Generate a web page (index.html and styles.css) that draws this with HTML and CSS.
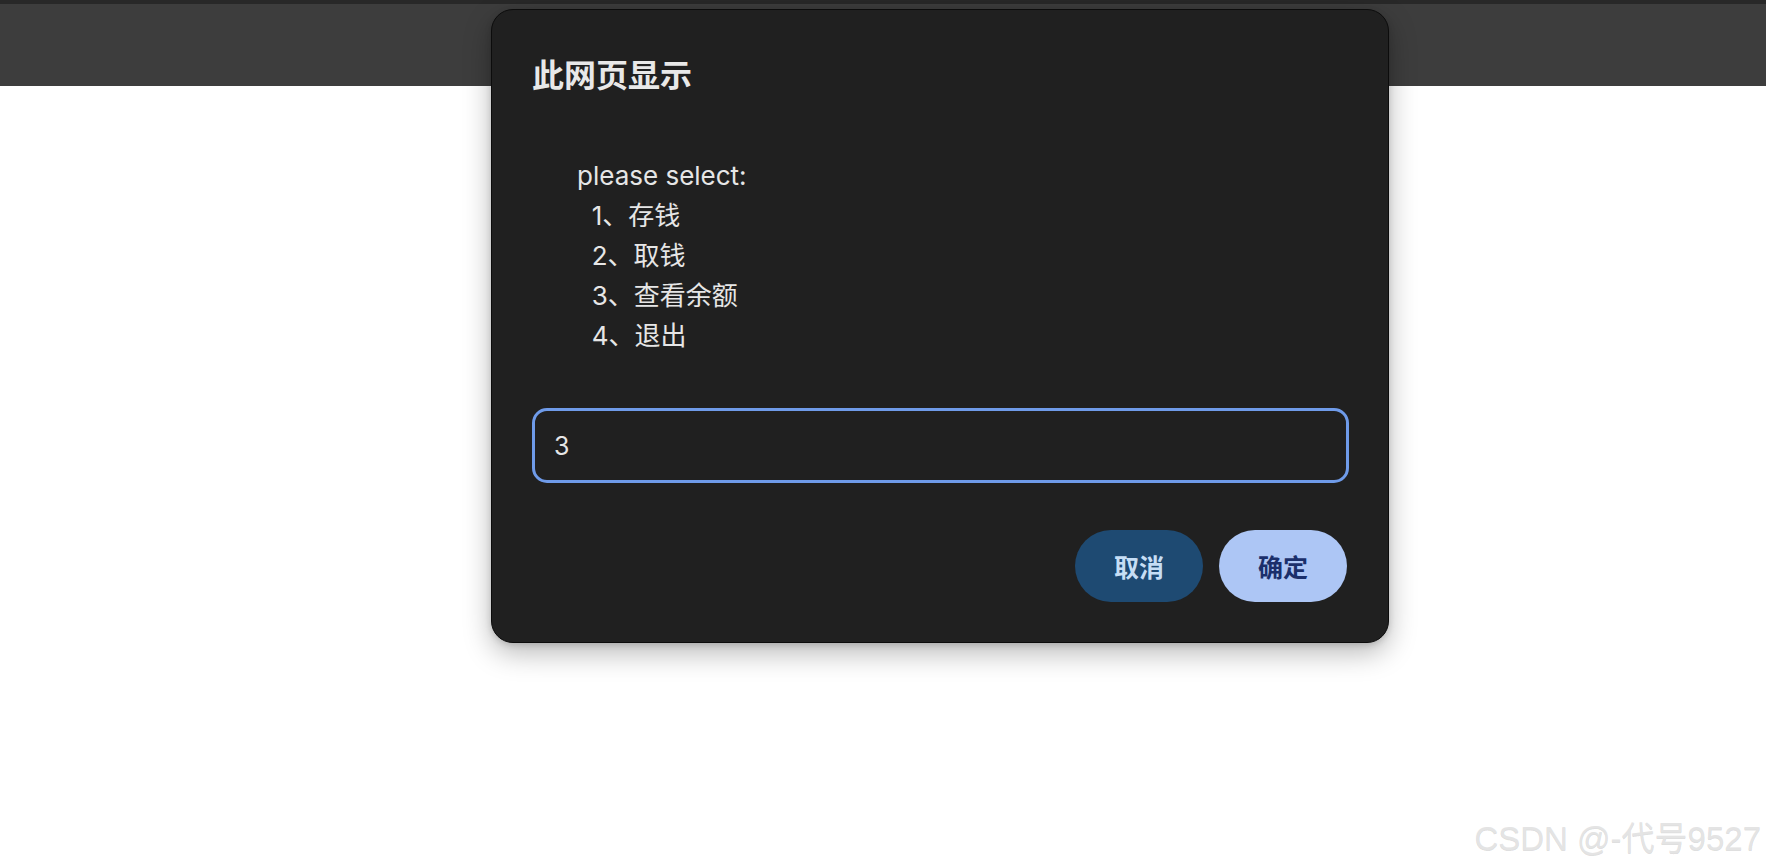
FILE: index.html
```html
<!DOCTYPE html>
<html lang="zh-CN">
<head>
<meta charset="utf-8">
<title>此网页显示</title>
<link rel="stylesheet" href="styles.css">
</head>
<body>
  <div class="topbar"></div>
  <div class="page"></div>

  <div class="dialog" role="dialog">
    <h1 class="dialog-title">此网页显示</h1>
    <div class="dialog-message">please select:
  1、存钱
  2、取钱
  3、查看余额
  4、退出</div>
    <div class="dialog-input"><span class="input-value">3</span></div>
    <div class="dialog-actions">
      <button class="btn btn-cancel">取消</button>
      <button class="btn btn-ok">确定</button>
    </div>
  </div>

  <div class="watermark">CSDN @-代号9527</div>
</body>
</html>
```

FILE: styles.css
```css
html, body {
  margin: 0;
  padding: 0;
  height: 100%;
  background: #ffffff;
  overflow: hidden;
}

body {
  font-family: "Inter", "Noto Sans CJK SC", sans-serif;
}

.topbar {
  height: 82px;
  background: #3d3d3d;
  border-top: 4px solid #282828;
}

.dialog {
  position: absolute;
  left: 491px;
  top: 9px;
  width: 898px;
  height: 634px;
  box-sizing: border-box;
  padding: 46px 39px 0 40px;
  background: #202020;
  border: 1px solid #0c0c0c;
  border-radius: 22px;
  box-shadow: 0 10px 28px rgba(0, 0, 0, 0.28), 0 2px 6px rgba(0, 0, 0, 0.15);
  display: flex;
  flex-direction: column;
  color: #e6e6e6;
}

.dialog-title {
  margin: 0;
  font-size: 32px;
  line-height: 40px;
  font-weight: 700;
  color: #e8e8e8;
}

.dialog-message {
  margin-top: 60px;
  padding-left: 45px;
  white-space: pre;
  font-size: 26px;
  line-height: 40px;
  color: #e6e6e6;
}

.dialog-input {
  margin-top: 52px;
  height: 75px;
  box-sizing: border-box;
  border: 3px solid #6f9be9;
  border-radius: 15px;
  display: flex;
  align-items: center;
  padding-left: 19px;
}

.input-value {
  font-size: 25px;
  color: #e6e6e6;
}

.dialog-actions {
  margin-top: 47px;
  display: flex;
  justify-content: flex-end;
  gap: 16px;
  padding-right: 2px;
}

.btn {
  width: 128px;
  height: 72px;
  border: none;
  border-radius: 36px;
  font-family: "Inter", "Noto Sans CJK SC", sans-serif;
  font-size: 25px;
  font-weight: 700;
  padding: 0;
}

.btn-cancel {
  background: #1e4a72;
  color: #c6def5;
}

.btn-ok {
  background: #adc6f5;
  color: #1b2f6b;
}

.watermark {
  position: absolute;
  right: 5px;
  bottom: 10px;
  font-family: "Liberation Sans", "Noto Sans CJK SC", sans-serif;
  font-size: 33px;
  line-height: 38px;
  font-weight: 400;
  color: #e4e4e4;
  text-shadow: 0 1px 0 rgba(0, 0, 0, 0.14);
}
```
